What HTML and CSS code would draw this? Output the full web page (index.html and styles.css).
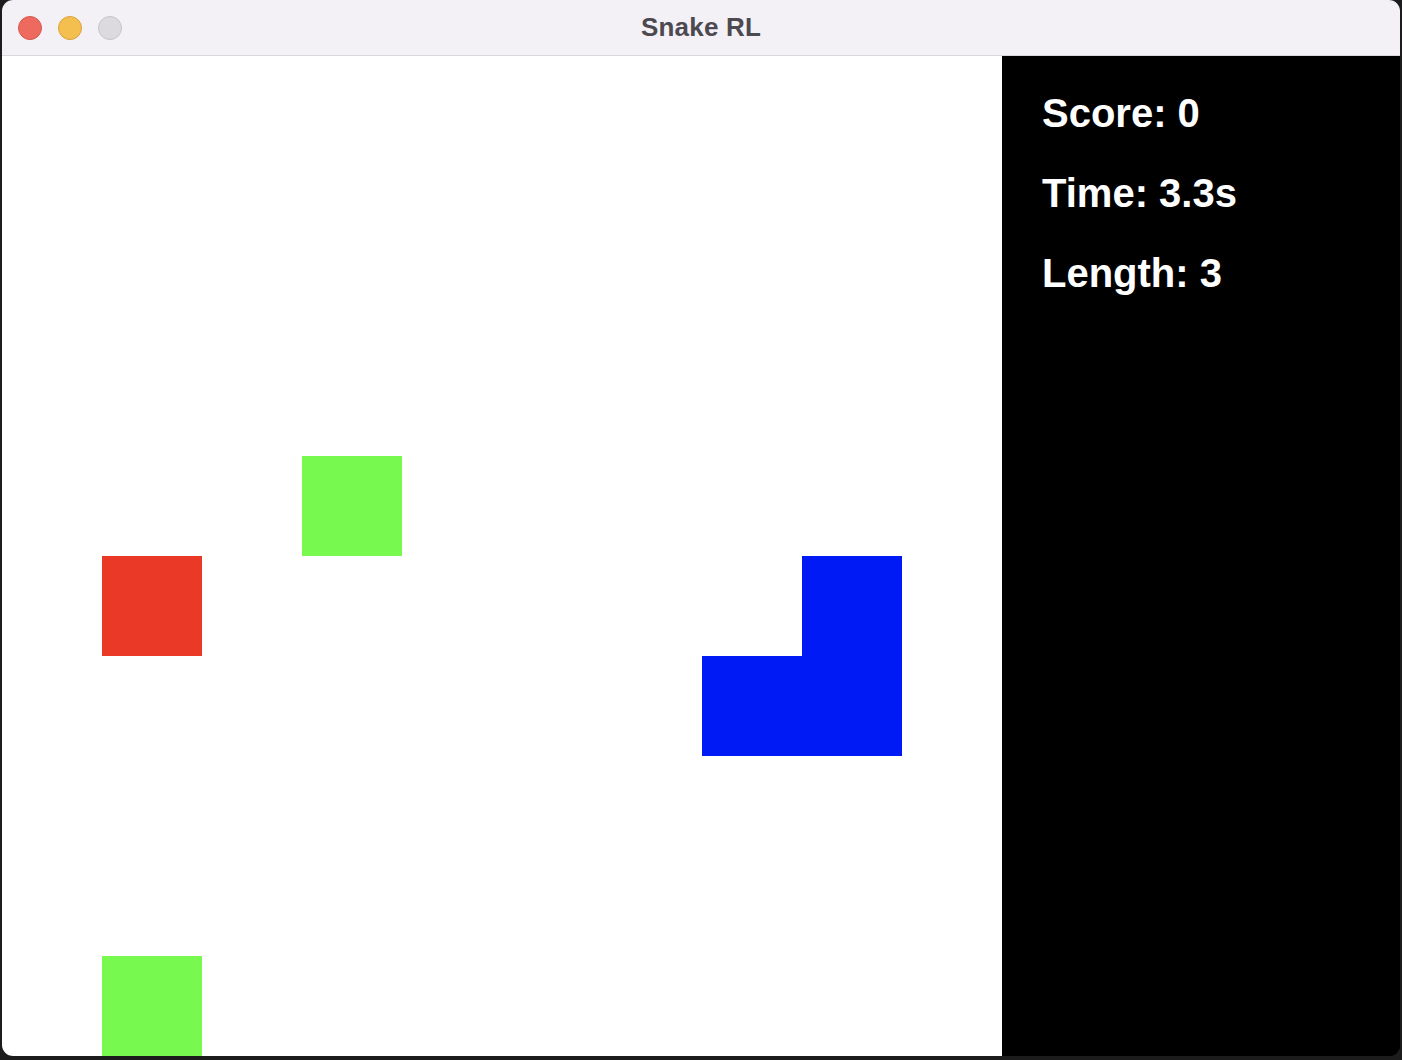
FILE: index.html
```html
<!DOCTYPE html>
<html>
<head>
<meta charset="utf-8">
<title>Snake RL</title>
<link rel="stylesheet" href="styles.css">
</head>
<body>
<div class="window">
  <div class="titlebar">
    <div class="lights">
      <span class="light red"></span>
      <span class="light yellow"></span>
      <span class="light gray"></span>
    </div>
    <div class="title">Snake RL</div>
  </div>
  <div class="content">
    <div class="board">
      <div class="cell food" style="grid-column:4;grid-row:5"></div>
      <div class="cell enemy" style="grid-column:2;grid-row:6"></div>
      <div class="cell snake" style="grid-column:9;grid-row:6"></div>
      <div class="cell snake" style="grid-column:8;grid-row:7"></div>
      <div class="cell snake" style="grid-column:9;grid-row:7"></div>
      <div class="cell food" style="grid-column:2;grid-row:10"></div>
    </div>
    <div class="panel">
      <div class="stat">Score: 0</div>
      <div class="stat">Time: 3.3s</div>
      <div class="stat">Length: 3</div>
    </div>
  </div>
</div>
</body>
</html>
```

FILE: styles.css
```css
html, body {
  margin: 0;
  padding: 0;
}
body {
  background: #1c1c1c;
  width: 1402px;
  height: 1060px;
  overflow: hidden;
  font-family: "Liberation Sans", Arial, sans-serif;
}
.window {
  margin-left: 2px;
  width: 1398px;
  height: 1056px;
  border-radius: 11px;
  overflow: hidden;
  display: flex;
  flex-direction: column;
  background: #000;
}
.titlebar {
  height: 55px;
  border-bottom: 1px solid #d9d7dc;
  background: #f3f1f6;
  position: relative;
  display: flex;
  align-items: center;
  justify-content: center;
}
.lights {
  position: absolute;
  left: 16px;
  top: 16px;
  display: flex;
  gap: 16px;
}
.light {
  width: 22px;
  height: 22px;
  border-radius: 50%;
  border: 1px solid transparent;
}
.light.red { background: #ee6a5f; border-color: #d5584c; }
.light.yellow { background: #f5bf4f; border-color: #d8a23d; }
.light.gray { background: #dcdade; border-color: #c6c4c9; }
.title {
  font-family: "Liberation Sans", Arial, sans-serif;
  font-weight: bold;
  font-size: 26px;
  color: #4c4a50;
  letter-spacing: 0.2px;
  margin-top: 0px;
}
.content {
  flex: 1;
  display: flex;
  min-height: 0;
}
.board {
  width: 1000px;
  height: 1000px;
  background: #fff;
  display: grid;
  grid-template-columns: repeat(10, 100px);
  grid-template-rows: repeat(10, 100px);
}
.cell { width: 100px; height: 100px; }
.food { background: #78f94f; }
.enemy { background: #eb3927; }
.snake { background: #001af5; }
.panel {
  flex: 1;
  background: #000;
  padding: 17px 0 0 40px;
  color: #fff;
}
.stat {
  font-family: "Liberation Sans", Arial, sans-serif;
  font-weight: bold;
  font-size: 40px;
  line-height: 80px;
  height: 80px;
}
```
